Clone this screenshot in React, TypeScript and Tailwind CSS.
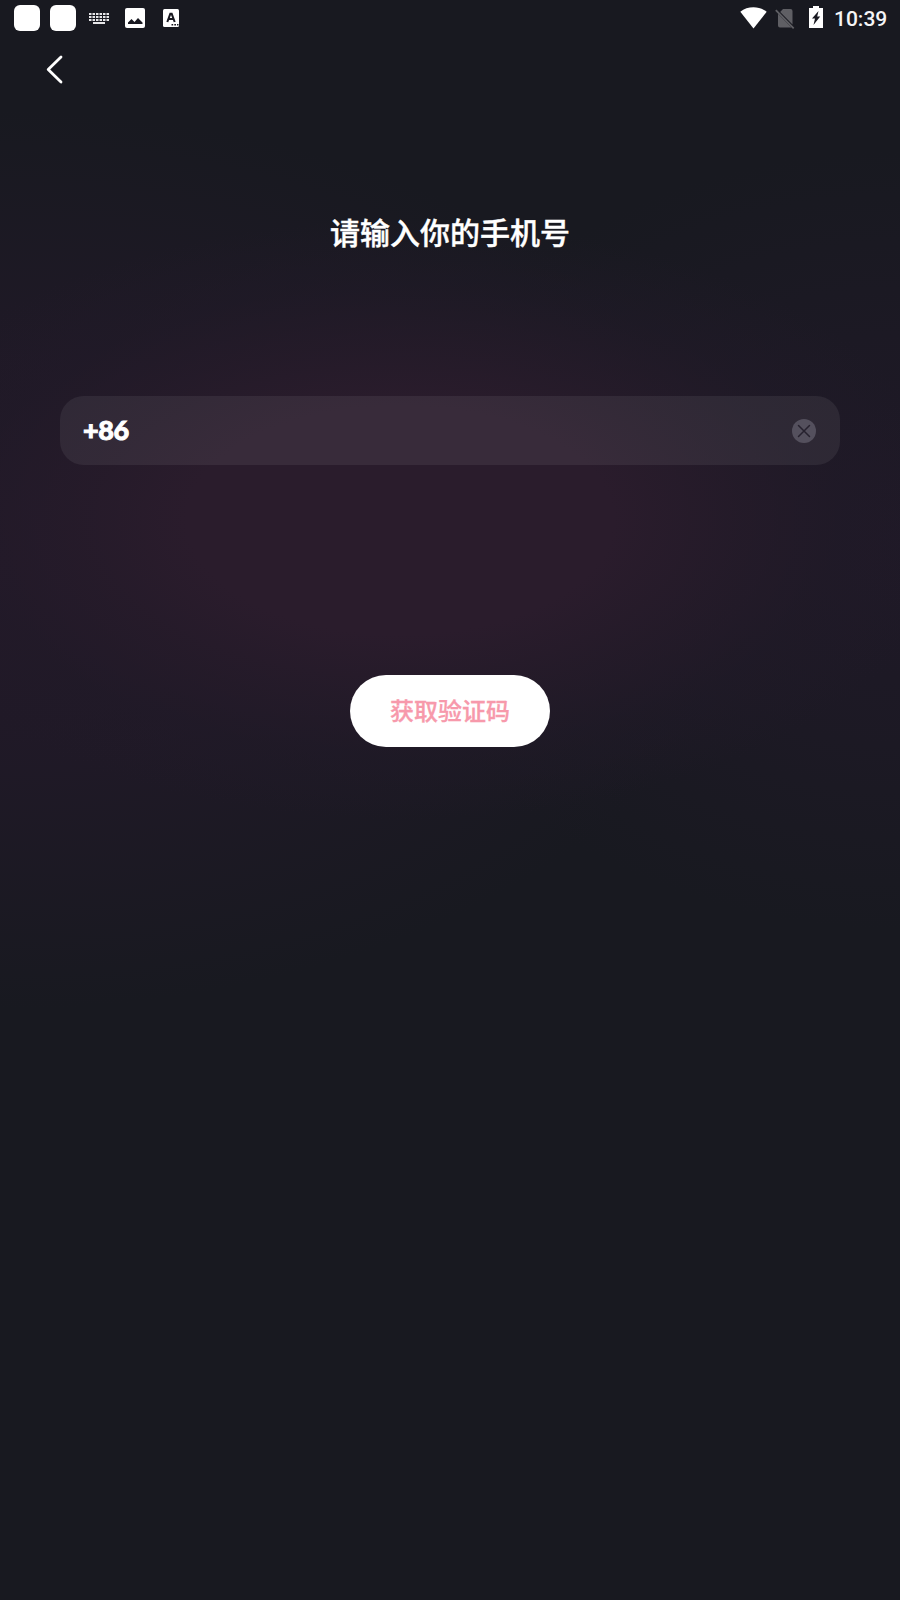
import React from "react";

const keys = [0, 1, 2, 3, 4, 5];

function StatusBar() {
  return (
    <header className="flex h-9 items-center justify-between pl-[14px] pr-[13px]">
      <div className="flex items-center">
        <span className="h-[26px] w-[26px] rounded-[6px] bg-white" />
        <span className="ml-[10px] h-[26px] w-[26px] rounded-[6px] bg-white" />
        <svg className="ml-[13px] mt-[1px] h-[12px] w-[20px]" viewBox="0 0 20 12" fill="#e6e6e8">
          {keys.map((k) => (
            <React.Fragment key={k}>
              <rect x={k * 3.5} y="0" width="2.5" height="2" />
              <rect x={k * 3.5} y="3" width="2.5" height="2" />
              <rect x={k * 3.5} y="6" width="2.5" height="2" />
            </React.Fragment>
          ))}
          <rect x="4" y="9" width="12" height="2" />
        </svg>
        <svg className="ml-[16px] h-5 w-5" viewBox="0 0 20 20">
          <rect width="20" height="20" rx="2" fill="white" />
          <path d="M3 16V14.500L6.500 11L9.500 14L13 10L17.500 14.500V16Z" fill="#191921" />
        </svg>
        <svg className="ml-[18px] h-[18px] w-4" viewBox="0 0 16 18">
          <rect width="16" height="18" rx="1.5" fill="white" />
          <path d="M4.300 13L7.300 4.800H8.700L11.700 13M5.600 10H10.400" fill="none" stroke="#191921" strokeWidth="2" />
          <path d="M8.500 15h1.700v1.500H8.500zM11.300 15H13v1.500h-1.700zM14 15h1.500v1.500H14z" fill="#191921" />
        </svg>
      </div>
      <div className="flex items-center">
        <svg className="h-[22px] w-[27px]" viewBox="0 0 27 22" fill="white">
          <path d="M13.500 21.500L.3 4.700C4 1.800 8.500.3 13.500.3s9.500 1.500 13.200 4.400Z" />
        </svg>
        <svg className="ml-[8px] h-[21px] w-[20px]" viewBox="0 0 20 21">
          <path d="M8 1H15.500Q17.500 1 17.500 3V16.500L5.200 4ZM3 5.800L16.500 19.500H5Q3 19.500 3 17.500Z" fill="#5f5f64" />
          <path d="M.8 2.200L18.700 20.300" stroke="#5f5f64" strokeWidth="1.800" />
        </svg>
        <svg className="ml-[14px] mb-[2px] h-[22px] w-[14px]" viewBox="0 0 14 22">
          <path d="M4 0H10V2H14V22H0V2H4Z" fill="white" />
          <path d="M9.500 5L3 12.600H6L4.500 19L11.200 10.500H8.200Z" fill="#191921" />
        </svg>
        <time className="ml-[11px] mt-[1px] w-[53px] whitespace-nowrap font-['Roboto',sans-serif] text-[21px] font-medium leading-6 text-[#f5f5f6]">10:39</time>
      </div>
    </header>
  );
}

export default function App() {
  return (
    <div className="h-[1600px] w-[900px] bg-[#181920] bg-[radial-gradient(ellipse_560px_300px_at_400px_520px,#2a1c2c_0%,#2a1c2c_38%,rgba(38,27,42,0.8)_58%,rgba(33,26,40,0.5)_78%,rgba(30,25,38,0)_100%),radial-gradient(ellipse_750px_450px_at_0px_560px,#231929_0%,rgba(33,25,40,0.8)_45%,rgba(26,25,34,0)_100%),radial-gradient(ellipse_520px_390px_at_900px_540px,#1f1927_0%,rgba(30,25,38,0.7)_50%,rgba(26,25,34,0)_100%)]">
      <StatusBar />
      <main className="flex flex-col items-center">
        <nav className="flex h-[68px] w-full items-center pb-[2px] pl-[46px]">
          <button aria-label="返回">
            <svg className="block h-[29px] w-[18px]" viewBox="0 0 18 29" fill="none">
              <path d="M15 2L2.200 14.500L15 27" stroke="white" strokeWidth="2.800" strokeLinecap="round" strokeLinejoin="round" />
            </svg>
          </button>
        </nav>
        <h1 className="mt-[105px] font-['Noto_Sans_CJK_SC',sans-serif] text-[30px] font-medium leading-[44px] text-white [-webkit-text-stroke:0.4px_white]">请输入你的手机号</h1>
        <div className="mt-[143px] flex h-[69px] w-[780px] items-center justify-between rounded-[24px] bg-white/[0.065] pl-[23px] pr-[24px]">
          <span className="mb-[1px] font-['Lato',sans-serif] text-[27px] font-black leading-8 tracking-[-0.4px] text-white [-webkit-text-stroke:0.9px_white]">+86</span>
          <button aria-label="清除">
            <svg className="block h-6 w-6" viewBox="0 0 24 24">
              <circle cx="12" cy="12" r="12" fill="#54505d" />
              <path d="M6.500 6.500L17.500 17.500M17.500 6.500L6.500 17.500" stroke="#26212e" strokeWidth="1.500" strokeLinecap="round" />
            </svg>
          </button>
        </div>
        <button className="mt-[210px] flex h-[72px] w-[200px] items-center justify-center rounded-full bg-white pb-[2px] font-['Noto_Sans_CJK_SC',sans-serif] text-[24px] font-medium leading-9 text-[#f799ab] [-webkit-text-stroke:0.3px_#f799ab]">
          获取验证码
        </button>
      </main>
    </div>
  );
}
